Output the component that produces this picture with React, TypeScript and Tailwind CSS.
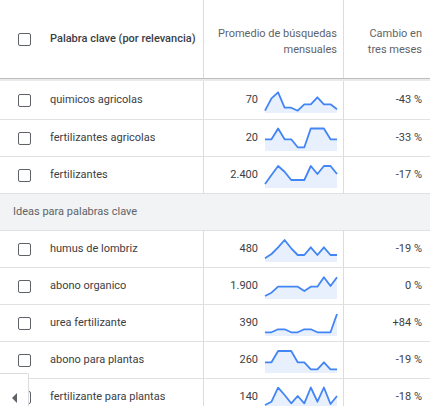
import React from "react";

type Row = { kw: string; avg: string; trend: number[]; change: string };

const top: Row[] = [
  { kw: "quimicos agricolas", avg: "70", trend: [20.7, 8.3, 2.3, 17.7, 17.7, 20.7, 14.3, 14.3, 7.3, 14.3, 14.3, 19.3], change: "-43 %" },
  { kw: "fertilizantes agricolas", avg: "20", trend: [11.3, 11.3, 0.5, 11.3, 11.3, 19.3, 19.3, 0.5, 0.5, 0.5, 11.3, 11.3], change: "-33 %" },
  { kw: "fertilizantes", avg: "2.400", trend: [19, 10, 1, 6.7, 15, 15, 15, 1, 9, 1, 1, 9], change: "-17 %" },
];

const ideas: Row[] = [
  { kw: "humus de lombriz", avg: "480", trend: [19.3, 15, 8.3, 1, 9.3, 16, 16, 8.3, 16, 8.3, 16, 16], change: "-19 %" },
  { kw: "abono organico", avg: "1.900", trend: [20, 16.7, 10.7, 10.7, 10.7, 10.7, 15, 10.7, 10.7, 1.3, 10, 1.3], change: "0 %" },
  { kw: "urea fertilizante", avg: "390", trend: [19.3, 19.3, 16.3, 16.3, 19.3, 19.3, 16.3, 16.3, 19.3, 19.3, 19.3, 1], change: "+84 %" },
  { kw: "abono para plantas", avg: "260", trend: [12.3, 12.3, 1, 1, 1, 12.3, 12.3, 19.3, 19.3, 12.3, 19.3, 19.3], change: "-19 %" },
  { kw: "fertilizante para plantas", avg: "140", trend: [18, 14.7, 0.7, 8, 16.3, 9, 16.3, 0.5, 14.7, 0.5, 17, 9], change: "-18 %" },
];

function Sparkline({ data }: { data: number[] }) {
  const step = 72 / (data.length - 1);
  const pts = data.map((y, i) => `${(i * step).toFixed(1)},${y}`).join(" ");
  return (
    <svg width="72" height="23" viewBox="0 0 72 23" className="mt-[3px] shrink-0 overflow-visible">
      <polygon points={`0,23 ${pts} 72,23`} fill="#e8f0fe" />
      <polyline points={pts} fill="none" stroke="#4285f4" strokeWidth="1.8" strokeLinejoin="round" />
    </svg>
  );
}

function Checkbox() {
  return <div className="h-[13px] w-[13px] shrink-0 rounded-[2px] border-[1.5px] border-[#5f6368] bg-white" />;
}

function DataRow({ row, first }: { row: Row; first?: boolean }) {
  return (
    <div className={`grid grid-cols-[204px_140px_86px] border-b border-[#e0e0e0] ${first ? "h-[39px]" : "h-[37px]"}`}>
      <div className="flex items-center gap-[19px] border-r border-[#dadce0] pl-[18px]">
        <Checkbox />
        <span className="truncate">{row.kw}</span>
      </div>
      <div className="flex items-center justify-end gap-[7px] border-r border-[#dadce0] pr-[6px]">
        <span>{row.avg}</span>
        <Sparkline data={row.trend} />
      </div>
      <div className="flex items-center justify-end pr-[8px]">{row.change}</div>
    </div>
  );
}

export default function App() {
  return (
    <div
      className="relative h-[406px] w-[430px] overflow-hidden bg-white text-[11px] text-[#3c4043]"
      style={{ fontFamily: "Roboto, 'Liberation Sans', sans-serif" }}
    >
      {/* header */}
      <div className="grid h-[78px] grid-cols-[204px_140px_86px] text-[11px] leading-4 text-[#5f6368]">
        <div className="flex items-center gap-[19px] border-r border-[#dadce0] pl-[18px]">
          <Checkbox />
          <span className="font-medium text-[#3c4043]">Palabra clave (por relevancia)</span>
        </div>
        <div className="flex items-center justify-end border-r border-[#dadce0] pr-[6px] pt-[5px] text-right">
          Promedio de búsquedas
          <br />
          mensuales
        </div>
        <div className="flex items-center justify-end pr-[8px] pt-[5px] text-right">
          Cambio en
          <br />
          tres meses
        </div>
      </div>
      <div className="h-px bg-[#bdbdbd]" />
      <div className="h-[2px] bg-[#e8eaed]" />

      {top.map((r, i) => (
        <DataRow key={r.kw} row={r} first={i === 0} />
      ))}

      <div className="flex h-[37px] items-center border-b border-[#e0e0e0] bg-[#f1f3f4] pl-[13px] text-[#5f6368]">
        Ideas para palabras clave
      </div>

      {ideas.map((r) => (
        <DataRow key={r.kw} row={r} />
      ))}

      {/* horizontal scroll button */}
      <div className="absolute left-0 top-[373px] flex h-[40px] w-[29px] items-start justify-center rounded-tr-[2px] border-r border-t border-[#dadce0] bg-white pt-[19px]">
        <div className="h-0 w-0 border-y-[5px] border-r-[5px] border-y-transparent border-r-[#5f6368]" />
      </div>
    </div>
  );
}
